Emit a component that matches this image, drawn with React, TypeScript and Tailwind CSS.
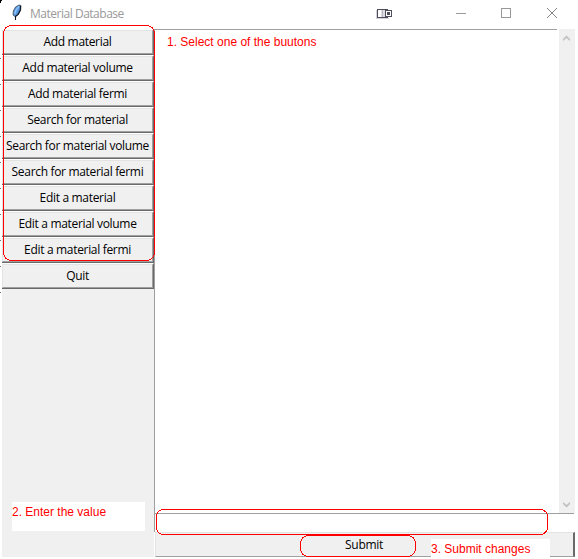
const ACTIONS = [
  'Add material',
  'Add material volume',
  'Add material fermi',
  'Search for material',
  'Search for material volume',
  'Search for material fermi',
  'Edit a material',
  'Edit a material volume',
  'Edit a material fermi',
  'Quit',
];

function FeatherIcon() {
  return (
    <svg width="12" height="18" viewBox="0 0 12 18" className="mt-[3px] ml-[11px] shrink-0">
      <path d="M8 2 L10 2.5 L9.700 7 L7.500 11.5 L4 13.500 L2 12 L2.300 8 L4.500 4 Z" fill="#5596e0" stroke="#303840" strokeWidth=".7" />
      <path d="M8 3.500 L5 7 L3.800 11" fill="none" stroke="#8fc3f5" strokeWidth="1.500" />
      <path d="M9.500 3 L9.300 7 L7 11.500 L4.500 13.500 V17" fill="none" stroke="#101820" strokeWidth="1.1" />
    </svg>
  );
}

function TitleBar() {
  return (
    <header className="flex h-[29px] w-[578px] shrink-0">
      <FeatherIcon />
      <h1 className="ml-[7px] w-[95px] pt-[6px] text-[12px] leading-4 tracking-[-0.48px] whitespace-nowrap text-[#999999]">Material Database</h1>
      <svg width="200" height="29" viewBox="0 0 200 29" className="ml-[243px] shrink-0" shapeRendering="crispEdges" fill="none">
        <path d="M8 18.500 H21" stroke="#d2d2d8" />
        <path d="M8.500 10 V19" stroke="#d2d2d8" />
        <rect x="9.500" y="9.500" width="10" height="8" stroke="#4d4d5e" />
        <rect x="13" y="10" width="5" height="7" fill="#dcdce2" />
        <path d="M14.500 10 V17" stroke="#b8b8c0" />
        <rect x="17.500" y="10.500" width="6" height="6" fill="#fff" stroke="#4d4d5e" />
        <rect x="19" y="12" width="3" height="3" fill="#4d4d5e" />
        <path d="M88 13.500 H98" stroke="#999999" />
        <rect x="133.500" y="8.500" width="9" height="9" stroke="#999999" />
        <path d="M179 8 L189 18 M189 8 L179 18" stroke="#858585" shapeRendering="auto" />
      </svg>
    </header>
  );
}

function ActionButton({ label }: { label: string }) {
  return (
    <button className="h-[26px] w-[152px] border-t border-r border-b border-t-white border-r-[#696969] border-b-[#696969]">
      <span className="flex h-[24px] justify-center border border-t-[#e3e3e3] border-r-[#a0a0a0] border-b-[#a0a0a0] border-l-[#e3e3e3] pt-[3px] text-[12px] leading-4 tracking-[-0.32px] whitespace-nowrap">
        {label}
      </span>
    </button>
  );
}

function ScrollBar() {
  return (
    <div className="flex h-[484px] w-4 flex-col justify-between bg-[#f0f0f0]">
      <svg width="16" height="17" viewBox="0 0 16 17">
        <path d="M4 10 L7.500 6.500 L11 10 V12 L7.500 9 L4 12 Z" fill="#bfbfbf" />
      </svg>
      <svg width="16" height="17" viewBox="0 0 16 17">
        <path d="M4 8 L7.500 11.500 L11 8 V6 L7.500 9 L4 6 Z" fill="#bfbfbf" />
      </svg>
    </div>
  );
}

export default function App() {
  return (
    <div className="relative h-[559px] w-[578px] overflow-hidden bg-white font-['Open_Sans','Noto_Sans',sans-serif] text-black">
      <TitleBar />
      <div className="flex h-[528px]">
        <aside className="ml-[2px] flex w-[152px] shrink-0 flex-col bg-[#f0f0f0]">
          {ACTIONS.map((label) => <ActionButton key={label} label={label} />)}
        </aside>
        <main className="w-[421px] shrink-0">
          <div className="flex h-[484px]">
            <div className="w-[403px] border-t border-l border-[#a0a0a0] pt-[5px] pl-[12px] font-['Liberation_Sans',sans-serif] text-[12px] leading-[15px] text-[#f00]">
              1. Select one of the buutons
            </div>
            <div className="w-[2px]" />
            <ScrollBar />
          </div>
          <div className="h-[19px] w-[420px] border-t border-l border-[#a0a0a0]" />
          <button className="ml-px flex h-[25px] w-[420px] justify-center border-t border-r-2 border-b border-l border-t-[#e3e3e3] border-r-[#696969] border-b-[#a0a0a0] border-l-[#e3e3e3] bg-[#f0f0f0] pt-[4px] pr-px text-[12px] leading-4 tracking-[-0.3px]">
            Submit
          </button>
        </main>
      </div>
      <div className="absolute top-[502px] left-[12px] h-[29px] w-[133px] bg-white pt-[3px] font-['Liberation_Sans',sans-serif] text-[12px] leading-[15px] text-[#f00]">2. Enter the value</div>
      <div className="absolute top-[539px] left-[431px] h-[20px] w-[119px] bg-white pt-[3px] font-['Liberation_Sans',sans-serif] text-[12px] leading-[15px] text-[#f00]">3. Submit changes</div>
      <svg className="pointer-events-none absolute inset-0" width="578" height="559" shapeRendering="crispEdges" fill="none">
        <path d="M0 .5 H2 M.5 0 V3" stroke="#000" />
        <path d="M0 58.500 h1 M0 84.500 h1 M0 110.500 h1 M0 136.500 h1 M0 162.500 h1 M0 188.500 h1 M0 214.500 h1 M0 240.500 h1 M0 266.500 h1 M0 292.500 h1" stroke="#777" />
        <g stroke="#f00">
          <rect x="3.500" y="25.500" width="151" height="235" rx="8" ry="8" />
          <rect x="156.500" y="509.500" width="391" height="25" rx="7" />
          <rect x="300.500" y="535.500" width="115" height="21" rx="8" />
          <path d="M307 534.500 H409" />
        </g>
      </svg>
    </div>
  );
}
